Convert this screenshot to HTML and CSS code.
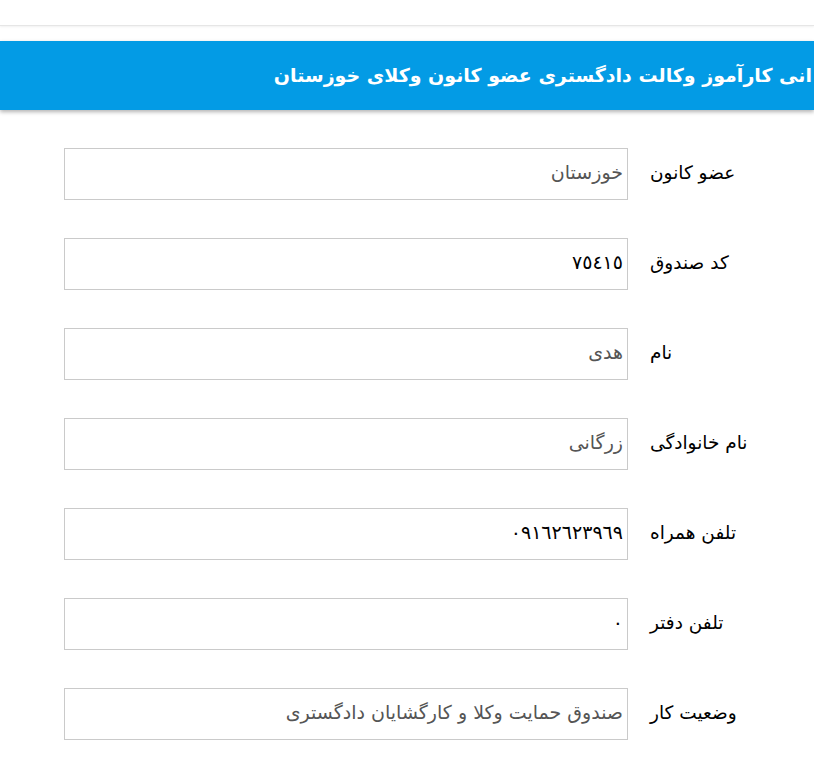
FILE: index.html
```html
<!DOCTYPE html>
<html lang="fa">
<head>
<meta charset="utf-8">
<link rel="stylesheet" href="styles.css">
</head>
<body>
<div class="topbar"></div>
<div class="header">
  <h1 class="title">انی کارآموز وکالت دادگستری عضو کانون وکلای خوزستان</h1>
</div>
<form class="form">
  <div class="row">
    <div class="field muted">خوزستان</div>
    <label class="label">عضو کانون</label>
  </div>
  <div class="row">
    <div class="field">٧٥٤١٥</div>
    <label class="label">کد صندوق</label>
  </div>
  <div class="row">
    <div class="field muted">هدی</div>
    <label class="label">نام</label>
  </div>
  <div class="row">
    <div class="field muted">زرگانی</div>
    <label class="label">نام خانوادگی</label>
  </div>
  <div class="row">
    <div class="field">٠٩١٦٢٦٢٣٩٦٩</div>
    <label class="label">تلفن همراه</label>
  </div>
  <div class="row">
    <div class="field">٠</div>
    <label class="label">تلفن دفتر</label>
  </div>
  <div class="row">
    <div class="field muted">صندوق حمایت وکلا و کارگشایان دادگستری</div>
    <label class="label">وضعیت کار</label>
  </div>
</form>
</body>
</html>
```

FILE: styles.css
```css
html, body {
  margin: 0;
  padding: 0;
  background: #fff;
  overflow: hidden;
}
body {
  font-family: "DejaVu Sans", sans-serif;
  width: 814px;
  height: 760px;
}
.topbar {
  height: 25px;
  border-bottom: 1px solid #e6e6e6;
  box-shadow: 0 1px 2px rgba(0,0,0,0.06);
}
.header {
  margin-top: 15px;
  height: 69px;
  background: #039be5;
  box-shadow: 0 2px 4px rgba(0,0,0,0.3);
  display: flex;
  align-items: center;
  justify-content: flex-end;
  overflow: hidden;
}
.title {
  margin: 0 2px 2px 0;
  direction: rtl;
  white-space: nowrap;
  color: #fff;
  font-size: 19px;
  font-weight: bold;
}
.form {
  padding-top: 38px;
  display: flex;
  flex-direction: column;
  gap: 38px;
}
.row {
  display: flex;
  align-items: center;
  padding-left: 64px;
  gap: 22px;
}
.field {
  box-sizing: border-box;
  width: 564px;
  height: 52px;
  border: 1px solid #cacaca;
  direction: rtl;
  text-align: right;
  padding: 0 4px 4px 0;
  display: flex;
  align-items: center;
  font-size: 19px;
  color: #000;
}
.field.muted {
  color: #555;
}
.label {
  direction: rtl;
  font-size: 18.5px;
  color: #000;
  padding-bottom: 4px;
}
```
